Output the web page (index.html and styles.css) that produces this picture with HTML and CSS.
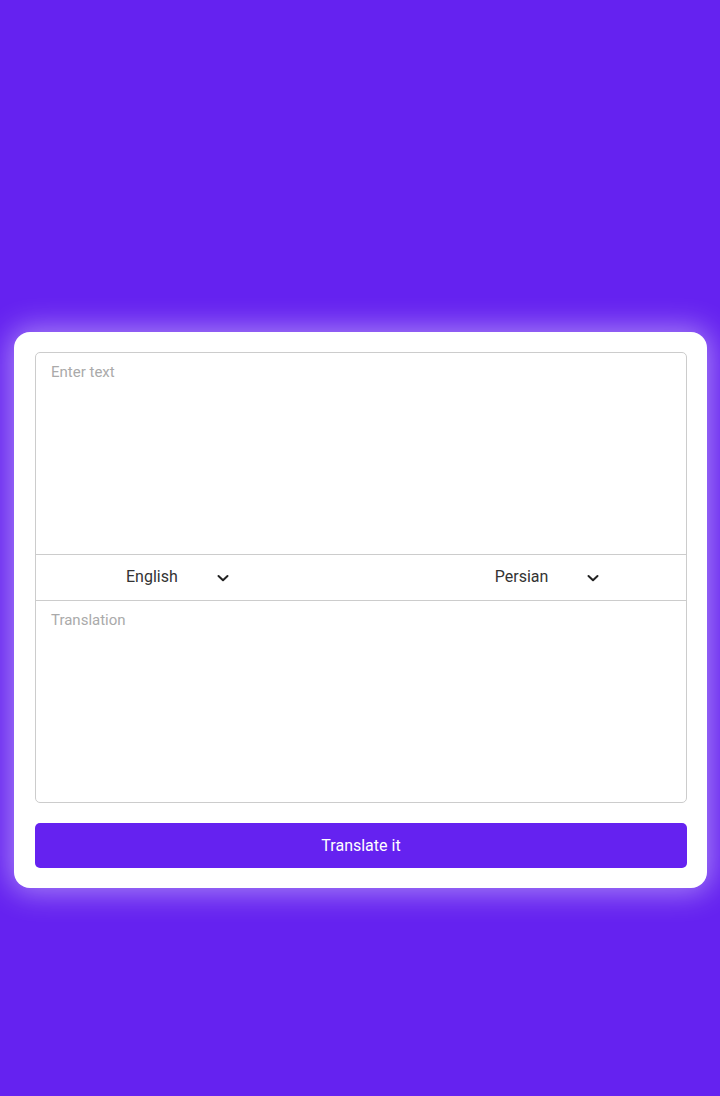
FILE: index.html
```html
<!DOCTYPE html>
<html lang="en">
<head>
<meta charset="utf-8">
<title>Translator</title>
<link rel="stylesheet" href="styles.css">
</head>
<body>
<main class="page">
  <section class="card">
    <div class="box">
      <div class="field field-top">Enter text</div>
      <div class="langs">
        <div class="select select-from">
          <span class="lang">English</span>
          <svg class="chev" width="14" height="10" viewBox="0 0 14 10"><path d="M2.5 3 L7 7.3 L11.5 3" fill="none" stroke="#222" stroke-width="2" stroke-linecap="round" stroke-linejoin="round"/></svg>
        </div>
        <div class="select select-to">
          <span class="lang">Persian</span>
          <svg class="chev" width="14" height="10" viewBox="0 0 14 10"><path d="M2.5 3 L7 7.3 L11.5 3" fill="none" stroke="#222" stroke-width="2" stroke-linecap="round" stroke-linejoin="round"/></svg>
        </div>
      </div>
      <div class="field field-bottom">Translation</div>
    </div>
    <button class="btn">Translate it</button>
  </section>
</main>
</body>
</html>
```
FILE: styles.css
```css
html, body {
  margin: 0;
  padding: 0;
}
body {
  background: #6522f0;
  font-family: Roboto, "Liberation Sans", sans-serif;
  height: 1096px;
  overflow: hidden;
}
.page {
  padding: 332px 13px 0 14px;
}
.card {
  background: #fff;
  border-radius: 16px;
  padding: 20px 20px 20px 21px;
  box-shadow: 0 0 30px 4px rgba(255, 255, 255, 0.45);
  display: flex;
  flex-direction: column;
  gap: 20px;
}
.box {
  border: 1px solid #cccccc;
  border-radius: 5px;
  display: flex;
  flex-direction: column;
}
.field {
  height: 201px;
  box-sizing: border-box;
  padding: 10px 15px;
  font-size: 15px;
  color: #aaaaaa;
}
.langs {
  height: 47px;
  border-top: 1px solid #cccccc;
  border-bottom: 1px solid #cccccc;
  box-sizing: border-box;
  padding-bottom: 2px;
  display: flex;
  align-items: center;
}
.select {
  display: flex;
  align-items: center;
  gap: 38px;
  font-size: 16px;
  color: #333;
}
.select-from {
  margin-left: 90px;
}
.select-to {
  margin-left: 265px;
}
.chev {
  display: block;
  margin-top: 2px;
}
.btn {
  height: 45px;
  border: none;
  border-radius: 5px;
  background: #6522f0;
  color: #fff;
  font-family: Roboto, "Liberation Sans", sans-serif;
  font-size: 16px;
  padding: 0;
}
```
